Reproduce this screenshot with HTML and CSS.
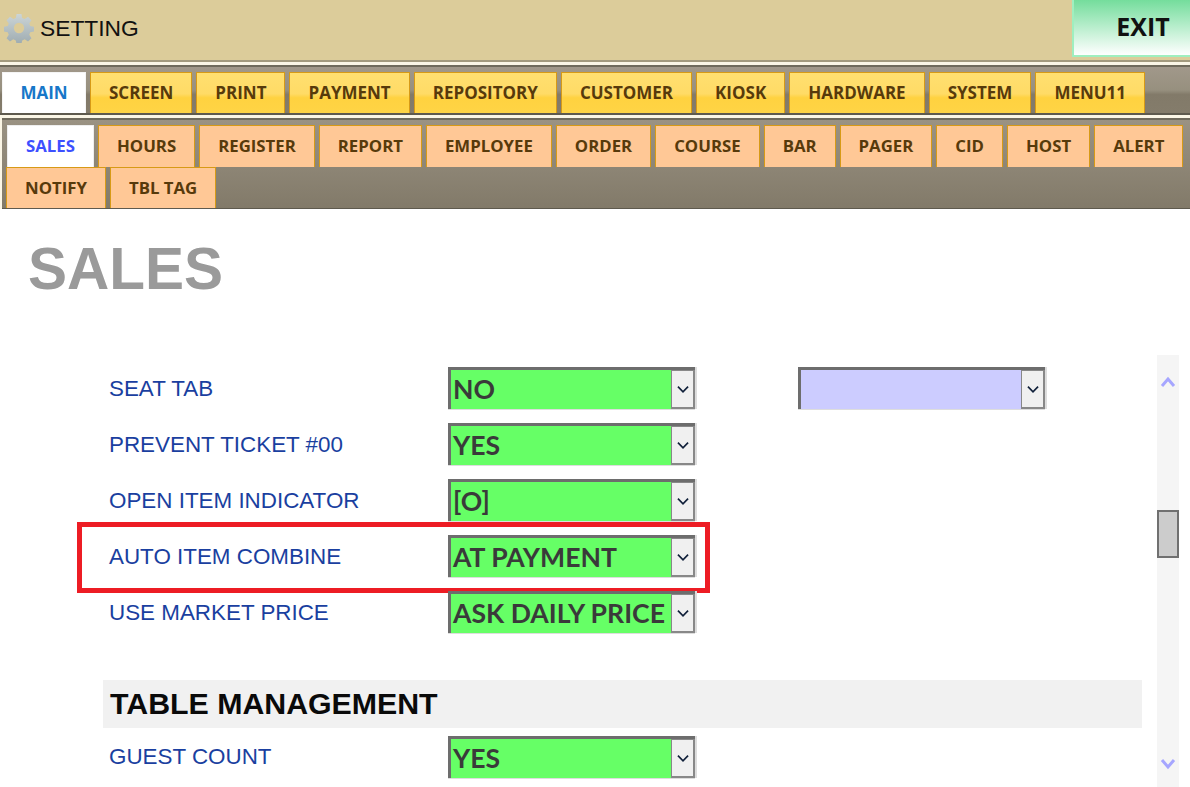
FILE: index.html
```html
<!DOCTYPE html>
<html lang="en">
<head>
<meta charset="utf-8">
<title>Setting</title>
<link rel="stylesheet" href="styles.css">
</head>
<body>
<div class="page">
  <header class="titlebar">
    <div class="brand">
      <svg class="gear" viewBox="0 0 32 32" width="30" height="30" aria-hidden="true">
        <defs><linearGradient id="g" x1="0" y1="0" x2="0" y2="1"><stop offset="0" stop-color="#ccd5d7"/><stop offset="1" stop-color="#9eabb0"/></linearGradient></defs>
        <path fill="url(#g)" fill-rule="evenodd" d="M13.4 1h5.2l.8 4.2 2.7 1.1 3.5-2.4 3.7 3.7-2.4 3.5 1.1 2.7 4.2.8v5.2l-4.2.8-1.1 2.7 2.4 3.5-3.7 3.7-3.5-2.4-2.7 1.1-.8 4.2h-5.2l-.8-4.2-2.7-1.1-3.5 2.4-3.7-3.7 2.4-3.5-1.1-2.7-4.2-.8v-5.2l4.2-.8 1.1-2.7-2.4-3.5 3.7-3.7 3.5 2.4 2.7-1.1zM16 10.5a5.5 5.5 0 1 0 0 11 5.5 5.5 0 0 0 0-11z"/>
      </svg>
      <span class="brand-text">SETTING</span>
    </div>
    <button class="exit">EXIT</button>
  </header>

  <nav class="main-tabs">
    <a class="tab tab-main active">MAIN</a>
    <a class="tab tab-main">SCREEN</a>
    <a class="tab tab-main">PRINT</a>
    <a class="tab tab-main">PAYMENT</a>
    <a class="tab tab-main">REPOSITORY</a>
    <a class="tab tab-main">CUSTOMER</a>
    <a class="tab tab-main">KIOSK</a>
    <a class="tab tab-main">HARDWARE</a>
    <a class="tab tab-main">SYSTEM</a>
    <a class="tab tab-main">MENU11</a>
  </nav>

  <nav class="sub-tabs">
    <a class="tab tab-sub active">SALES</a>
    <a class="tab tab-sub">HOURS</a>
    <a class="tab tab-sub">REGISTER</a>
    <a class="tab tab-sub">REPORT</a>
    <a class="tab tab-sub">EMPLOYEE</a>
    <a class="tab tab-sub">ORDER</a>
    <a class="tab tab-sub">COURSE</a>
    <a class="tab tab-sub">BAR</a>
    <a class="tab tab-sub">PAGER</a>
    <a class="tab tab-sub">CID</a>
    <a class="tab tab-sub">HOST</a>
    <a class="tab tab-sub">ALERT</a>
    <a class="tab tab-sub">NOTIFY</a>
    <a class="tab tab-sub">TBL TAG</a>
  </nav>

  <main class="content">
    <h1 class="page-title">SALES</h1>
    <div class="scroll-area">
      <div class="form">
        <div class="row">
          <label class="label">SEAT TAB</label>
          <div class="select"><span class="value">NO</span><span class="arrow"><svg viewBox="0 0 12 8" width="14" height="9"><path d="M1.5 1.5 6 6l4.5-4.5" fill="none" stroke="#10203a" stroke-width="1.5"/></svg></span></div>
          <div class="select select-empty"><span class="value"></span><span class="arrow"><svg viewBox="0 0 12 8" width="14" height="9"><path d="M1.5 1.5 6 6l4.5-4.5" fill="none" stroke="#10203a" stroke-width="1.5"/></svg></span></div>
        </div>
        <div class="row">
          <label class="label">PREVENT TICKET #00</label>
          <div class="select"><span class="value">YES</span><span class="arrow"><svg viewBox="0 0 12 8" width="14" height="9"><path d="M1.5 1.5 6 6l4.5-4.5" fill="none" stroke="#10203a" stroke-width="1.5"/></svg></span></div>
        </div>
        <div class="row">
          <label class="label">OPEN ITEM INDICATOR</label>
          <div class="select"><span class="value">[O]</span><span class="arrow"><svg viewBox="0 0 12 8" width="14" height="9"><path d="M1.5 1.5 6 6l4.5-4.5" fill="none" stroke="#10203a" stroke-width="1.5"/></svg></span></div>
        </div>
        <div class="row highlighted">
          <label class="label">AUTO ITEM COMBINE</label>
          <div class="select"><span class="value">AT PAYMENT</span><span class="arrow"><svg viewBox="0 0 12 8" width="14" height="9"><path d="M1.5 1.5 6 6l4.5-4.5" fill="none" stroke="#10203a" stroke-width="1.5"/></svg></span></div>
        </div>
        <div class="row">
          <label class="label">USE MARKET PRICE</label>
          <div class="select"><span class="value">ASK DAILY PRICE</span><span class="arrow"><svg viewBox="0 0 12 8" width="14" height="9"><path d="M1.5 1.5 6 6l4.5-4.5" fill="none" stroke="#10203a" stroke-width="1.5"/></svg></span></div>
        </div>
        <h2 class="section">TABLE MANAGEMENT</h2>
        <div class="row">
          <label class="label">GUEST COUNT</label>
          <div class="select"><span class="value">YES</span><span class="arrow"><svg viewBox="0 0 12 8" width="14" height="9"><path d="M1.5 1.5 6 6l4.5-4.5" fill="none" stroke="#10203a" stroke-width="1.5"/></svg></span></div>
        </div>
      </div>
      <div class="scrollbar">
        <svg class="chev-up" viewBox="0 0 16 12" width="16" height="12"><path d="M2 10 8 3l6 7" fill="none" stroke="#a6a6ff" stroke-width="3"/></svg>
        <div class="thumb"></div>
        <svg class="chev-down" viewBox="0 0 16 12" width="16" height="12"><path d="M2 2l6 7 6-7" fill="none" stroke="#a6a6ff" stroke-width="3"/></svg>
      </div>
    </div>
  </main>
</div>
</body>
</html>
```
FILE: styles.css
```css
* { box-sizing: border-box; }
html, body { margin: 0; padding: 0; background: #fff; }
.page { width: 1190px; height: 787px; overflow: hidden; display: flex; flex-direction: column; font-family: "Liberation Sans", Arial, sans-serif; background: #fbf6e6; }

.titlebar { height: 62px; flex: none; background: #dccc9a; border-bottom: 2px solid #a39a7e; display: flex; justify-content: space-between; align-items: flex-start; }
.brand { display: flex; align-items: center; height: 56px; padding-left: 4px; gap: 6px; }
.gear { flex: none; }
.brand-text { font-size: 22.8px; color: #111; position: relative; top: 0; }
.exit { width: 118px; height: 57px; border: 1px solid #9fefbf; border-width: 0 0 2px 2px; background: linear-gradient(#74dd9c, #fff); font: bold 25px "Open Sans", sans-serif; color: #111; padding: 0 0 3px 22px; text-align: center; }

.main-tabs { height: 50px; flex: none; margin-top: 3px; padding: 5px 0 0 2px; display: flex; gap: 4px; border-top: 2px solid #6f6a5c; border-bottom: 2px solid #5e5a4e; background: linear-gradient(#a1988a 0, #97907f 50%, #827a69 60%, #847c6b 100%); }
.tab { display: flex; align-items: center; justify-content: center; font-family: "Open Sans", sans-serif; font-weight: 700; color: #573a0b; white-space: nowrap; }
.tab-main { height: 41px; padding: 0 18px 2px; font-size: 17px; background: linear-gradient(#ffdf70 0, #ffdb66 52%, #ffd240 62%, #ffd445 100%); border: 1px solid #d79a16; border-bottom: 0; }
.tab-main.active { background: #fff; color: #1777c9; border-color: #f5f5f5; width: 84px; }
.sub-tabs { height: 91px; flex: none; margin-top: 3px; margin-left: 2px; padding: 5px 0 0 4px; display: flex; flex-wrap: wrap; align-content: flex-start; column-gap: 4px; border-top: 2px solid #6f6a5c; border-bottom: 1px solid #5e5a4e; background: linear-gradient(#9a9283, #827a69); }
.tab-sub { height: 41.5px; padding: 0 18px 1px; font-size: 16.8px; background: #ffc896; border: 1px solid #d79a16; border-bottom: 0; }
.tab-sub.active { background: #fff; color: #3d50ff; border-color: #eee; margin-left: 1px; }

.content { flex: 1; min-height: 0; background: #fff; position: relative; display: flex; flex-direction: column; }
.page-title { margin: 0; height: 146px; padding: 25px 0 0 28px; font-size: 58.5px; line-height: 70px; font-weight: 700; color: #9a9a9a; flex: none; }
.scroll-area { flex: 1; display: flex; min-height: 0; padding-left: 103px; }
.form { width: 1039px; padding-top: 12px; flex: none; }
.row { display: flex; height: 42px; margin-bottom: 14px; align-items: center; position: relative; }
.label { width: 345px; padding-left: 6px; color: #1a3fa0; font-size: 22.4px; position: relative; top: 1px; }
.select { width: 247px; height: 42px; display: flex; border: 3px solid #6d6d6d; border-width: 3px 0 0 3px; background: #66ff66; box-shadow: 0 1px 0 #ddd, 2px 0 0 #ddd; flex: none; }
.select-empty { background: #ccccff; margin-left: 103px; }
.value { flex: 1; padding-left: 2px; font: bold 26.6px/38px Lato, "Open Sans", sans-serif; color: #3a3a3a; white-space: nowrap; overflow: hidden; }
.arrow { width: 24px; flex: none; background: #f0f0f0; border: 1px solid #888; border-width: 1px 2px 2px 1px; display: flex; align-items: center; justify-content: center; }
.highlighted::after { content: ""; box-sizing: border-box; position: absolute; left: -26px; top: -13px; width: 633px; height: 71px; border: 5px solid #ed1c24; pointer-events: none; }
.section { margin: 47px 0 8px 0; height: 48px; background: #f1f1f1; padding-left: 7px; font-size: 30.3px; line-height: 48px; font-weight: 700; color: #0a0a0a; }
.section + .row .label { top: 0; }
.scrollbar { width: 22px; margin-left: 15px; flex: none; background: #f5f5f5; position: relative; display: flex; flex-direction: column; align-items: center; height: 100%; }
.chev-up { margin-top: 21px; flex: none; }
.thumb { width: 22px; height: 48px; margin-top: 122px; background: #ccc; border: 2px solid #707070; flex: none; }
.chev-down { margin-top: 200px; flex: none; }
```
